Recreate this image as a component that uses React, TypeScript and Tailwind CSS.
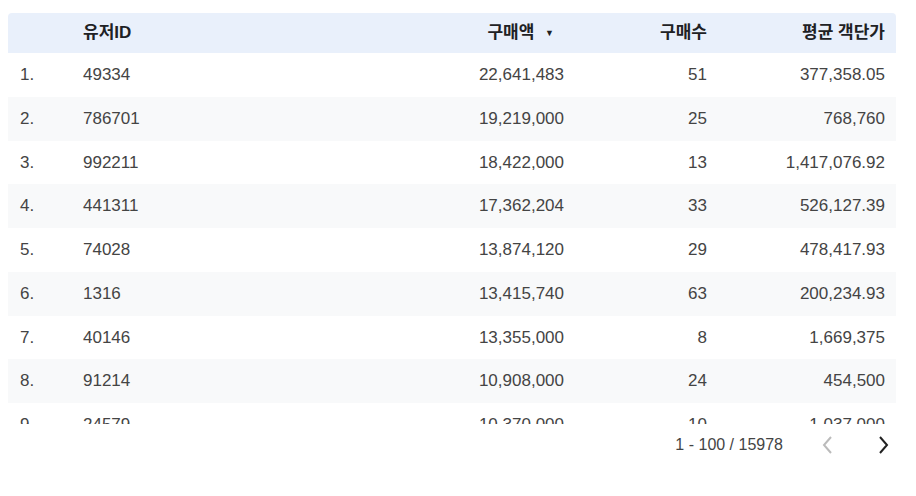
import React from "react";

const rows = [
  ["1.", "49334", "22,641,483", "51", "377,358.05"],
  ["2.", "786701", "19,219,000", "25", "768,760"],
  ["3.", "992211", "18,422,000", "13", "1,417,076.92"],
  ["4.", "441311", "17,362,204", "33", "526,127.39"],
  ["5.", "74028", "13,874,120", "29", "478,417.93"],
  ["6.", "1316", "13,415,740", "63", "200,234.93"],
  ["7.", "40146", "13,355,000", "8", "1,669,375"],
  ["8.", "91214", "10,908,000", "24", "454,500"],
  ["9.", "24579", "10,370,000", "10", "1,037,000"],
];

function Row({ r, i }: { r: string[]; i: number }) {
  return (
    <div className={`flex items-center h-[43.75px] text-[17px] text-[#444] ${i % 2 ? "bg-[#f8f9fa]" : "bg-white"}`}>
      <div className="w-[75px] pl-[12px]">{r[0]}</div>
      <div className="flex-1">{r[1]}</div>
      <div className="w-[150px] text-right">{r[2]}</div>
      <div className="w-[143px] text-right">{r[3]}</div>
      <div className="w-[189px] text-right pr-[11px]">{r[4]}</div>
    </div>
  );
}

export default function App() {
  return (
    <div className="w-[916px] h-[496px] bg-white pt-[13px] pl-[8px] pr-[20px]" style={{ fontFamily: "'Liberation Sans', 'Noto Sans CJK KR', sans-serif" }}>
      <div className="h-[411px] overflow-hidden">
        <div className="flex items-center h-[40px] bg-[#e9f0fb] rounded-t-[4px] text-[17px] font-bold text-[#202124]">
          <div className="w-[75px]"></div>
          <div className="flex-1">유저ID</div>
          <div className="w-[150px] text-right pr-[10px]">구매액 <span className="text-[9px] ml-[6px] align-middle">▼</span></div>
          <div className="w-[143px] text-right">구매수</div>
          <div className="w-[189px] text-right pr-[11px]">평균 객단가</div>
        </div>
        {rows.map((r, i) => <Row key={i} r={r} i={i} />)}
      </div>
      <div className="flex items-center justify-end h-[42px] text-[16px] text-[#444]">
        <span className="mr-[36px]">1 - 100 / 15978</span>
        <svg width="16" height="24" viewBox="0 0 16 24" className="mr-[41px]"><path d="M12 4 L5 12 L12 20" fill="none" stroke="#bbb" strokeWidth="2" /></svg>
        <svg width="16" height="24" viewBox="0 0 16 24" className="mr-[4px]"><path d="M4 4 L11 12 L4 20" fill="none" stroke="#222" strokeWidth="2" /></svg>
      </div>
    </div>
  );
}
